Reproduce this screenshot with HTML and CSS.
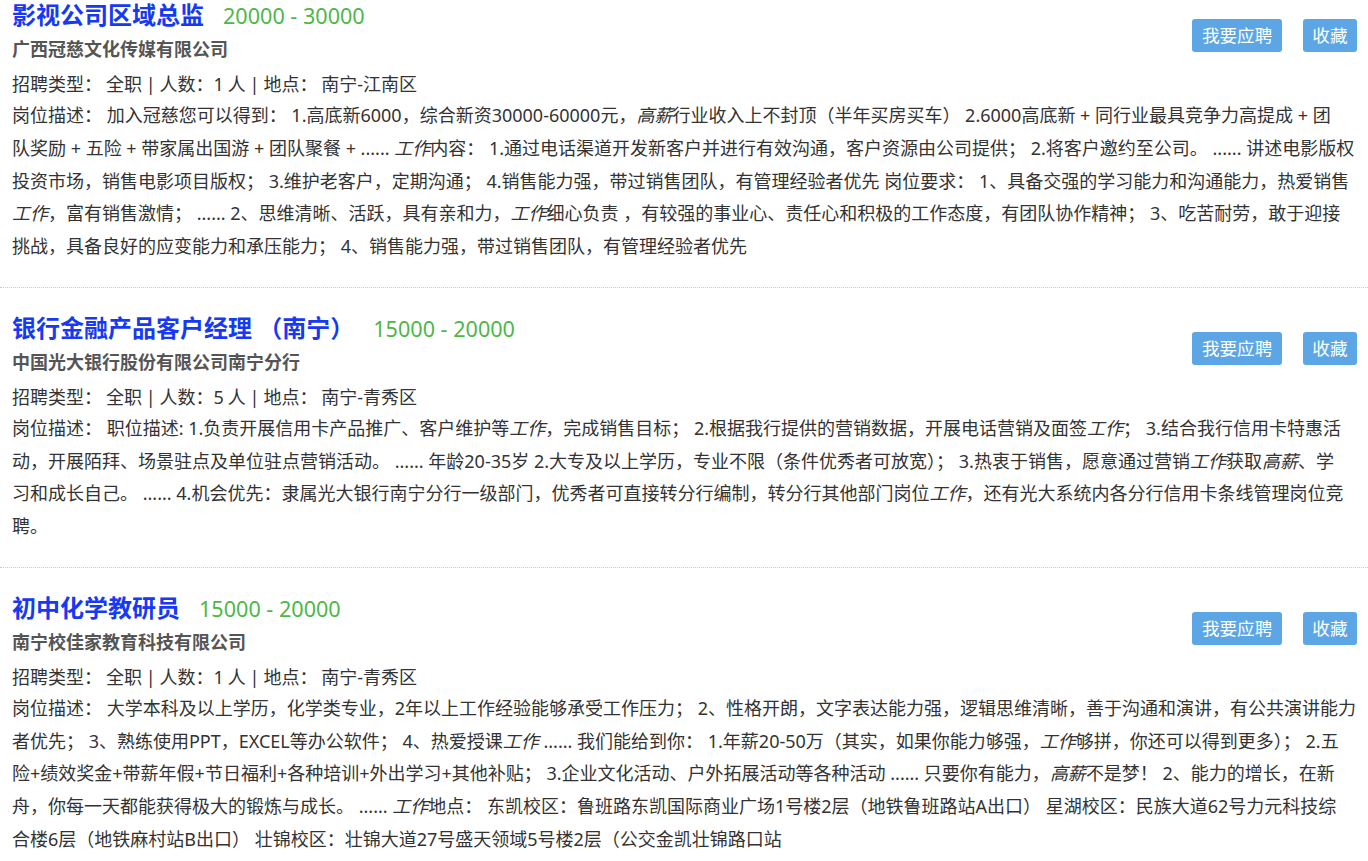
FILE: index.html
```html
<!DOCTYPE html>
<html lang="zh-CN">
<head>
<meta charset="utf-8">
<title>职位列表</title>
<link rel="stylesheet" href="styles.css">
</head>
<body>
<div class="job-list">

  <div class="job">
    <div class="job-head">
      <div class="job-main">
        <div class="job-title-row">
          <a class="job-title">影视公司区域总监</a>
          <span class="salary">20000 - 30000</span>
        </div>
        <div class="company">广西冠慈文化传媒有限公司</div>
        <div class="info">招聘类型： 全职 | 人数：1 人 | 地点： 南宁-江南区</div>
      </div>
      <div class="actions">
        <a class="btn">我要应聘</a>
        <a class="btn">收藏</a>
      </div>
    </div>
    <div class="desc">岗位描述： 加入冠慈您可以得到： 1.高底新6000，综合新资30000-60000元，<em>高薪</em>行业收入上不封顶（半年买房买车） 2.6000高底新 + 同行业最具竞争力高提成 + 团<br>队奖励 + 五险 + 带家属出国游 + 团队聚餐 + ...... <em>工作</em>内容： 1.通过电话渠道开发新客户并进行有效沟通，客户资源由公司提供； 2.将客户邀约至公司。 ...... 讲述电影版权<br>投资市场，销售电影项目版权； 3.维护老客户，定期沟通； 4.销售能力强，带过销售团队，有管理经验者优先 岗位要求： 1、具备交强的学习能力和沟通能力，热爱销售<br><em>工作</em>，富有销售激情； ...... 2、思维清晰、活跃，具有亲和力，<em>工作</em>细心负责 ，有较强的事业心、责任心和积极的工作态度，有团队协作精神； 3、吃苦耐劳，敢于迎接<br>挑战，具备良好的应变能力和承压能力； 4、销售能力强，带过销售团队，有管理经验者优先</div>
  </div>

  <div class="job">
    <div class="job-head">
      <div class="job-main">
        <div class="job-title-row">
          <a class="job-title">银行金融产品客户经理 （南宁）</a>
          <span class="salary">15000 - 20000</span>
        </div>
        <div class="company">中国光大银行股份有限公司南宁分行</div>
        <div class="info">招聘类型： 全职 | 人数：5 人 | 地点： 南宁-青秀区</div>
      </div>
      <div class="actions">
        <a class="btn">我要应聘</a>
        <a class="btn">收藏</a>
      </div>
    </div>
    <div class="desc">岗位描述： 职位描述: 1.负责开展信用卡产品推广、客户维护等<em>工作</em>，完成销售目标； 2.根据我行提供的营销数据，开展电话营销及面签<em>工作</em>； 3.结合我行信用卡特惠活<br>动，开展陌拜、场景驻点及单位驻点营销活动。 ...... 年龄20-35岁 2.大专及以上学历，专业不限（条件优秀者可放宽）； 3.热衷于销售，愿意通过营销<em>工作</em>获取<em>高薪</em>、学<br>习和成长自己。 ...... 4.机会优先：隶属光大银行南宁分行一级部门，优秀者可直接转分行编制，转分行其他部门岗位<em>工作</em>，还有光大系统内各分行信用卡条线管理岗位竞<br>聘。</div>
  </div>

  <div class="job">
    <div class="job-head">
      <div class="job-main">
        <div class="job-title-row">
          <a class="job-title">初中化学教研员</a>
          <span class="salary">15000 - 20000</span>
        </div>
        <div class="company">南宁校佳家教育科技有限公司</div>
        <div class="info">招聘类型： 全职 | 人数：1 人 | 地点： 南宁-青秀区</div>
      </div>
      <div class="actions">
        <a class="btn">我要应聘</a>
        <a class="btn">收藏</a>
      </div>
    </div>
    <div class="desc">岗位描述： 大学本科及以上学历，化学类专业，2年以上工作经验能够承受工作压力； 2、性格开朗，文字表达能力强，逻辑思维清晰，善于沟通和演讲，有公共演讲能力<br>者优先； 3、熟练使用PPT，EXCEL等办公软件； 4、热爱授课<em>工作</em> ...... 我们能给到你： 1.年薪20-50万（其实，如果你能力够强，<em>工作</em>够拼，你还可以得到更多）； 2.五<br>险+绩效奖金+带薪年假+节日福利+各种培训+外出学习+其他补贴； 3.企业文化活动、户外拓展活动等各种活动 ...... 只要你有能力，<em>高薪</em>不是梦！ 2、能力的增长，在新<br>舟，你每一天都能获得极大的锻炼与成长。 ...... <em>工作</em>地点： 东凯校区：鲁班路东凯国际商业广场1号楼2层（地铁鲁班路站A出口） 星湖校区：民族大道62号力元科技综<br>合楼6层（地铁麻村站B出口） 壮锦校区：壮锦大道27号盛天领域5号楼2层（公交金凯壮锦路口站</div>
  </div>

</div>
</body>
</html>
```
FILE: styles.css
```css
html, body {
  margin: 0;
  padding: 0;
  background: #ffffff;
}

body {
  font-family: "Noto Sans", "Noto Sans CJK SC", sans-serif;
  font-size: 18px;
  color: #333333;
}

.job {
  padding: 0 11px 24px 12px;
  border-bottom: 1px dotted #c8c8c8;
  margin-bottom: 25px;
}

.job-head {
  display: flex;
  align-items: flex-start;
  justify-content: space-between;
}

.job-main {
  flex: 1;
  min-width: 0;
}

.job-title-row {
  display: flex;
  align-items: baseline;
  height: 30px;
  line-height: 30px;
}

.job-title {
  font-size: 24px;
  font-weight: bold;
  color: #1639f3;
}

.salary {
  margin-left: 19px;
  font-size: 21.6px;
  color: #4db748;
}

.company {
  margin-top: 2px;
  line-height: 34px;
  font-weight: bold;
  color: #555555;
}

.info {
  margin-top: 1px;
  line-height: 34px;
  word-spacing: -0.8px;
}

.actions {
  display: flex;
  gap: 21px;
  margin-top: 19px;
}

.btn {
  display: block;
  height: 33px;
  line-height: 33px;
  padding: 0 9.5px;
  border-radius: 3px;
  background: #5ca6e5;
  color: #ffffff;
  font-size: 17.6px;
}

.desc {
  margin-top: -2px;
  line-height: 32.75px;
  white-space: nowrap;
}

.desc em {
  font-style: italic;
}
```
